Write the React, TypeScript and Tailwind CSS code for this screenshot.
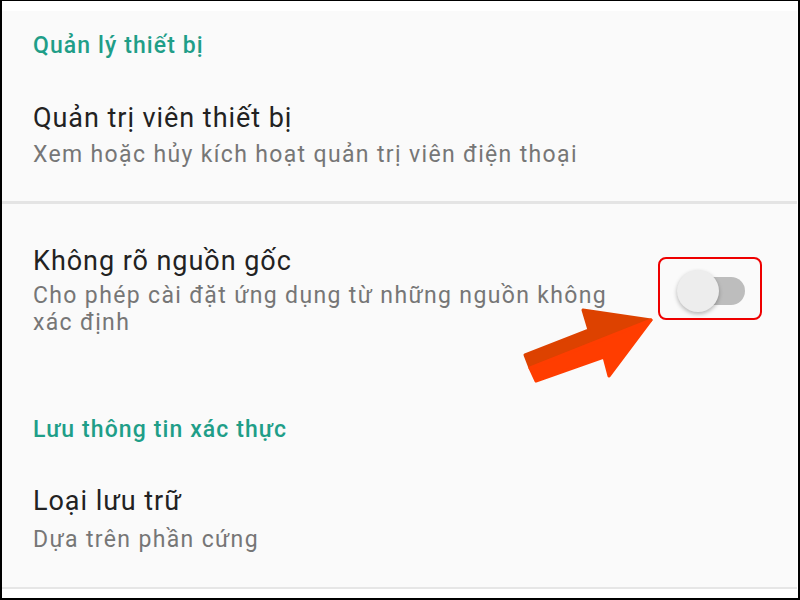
import React from "react";

function Arrow() {
  return (
    <svg
      className="absolute left-[515px] top-[300px]"
      width="145"
      height="90"
      viewBox="515 300 145 90"
    >
      <polygon
        points="649,319 581,309 587,329 523,354 528,367"
        fill="#dd4200"
        stroke="#dd4200"
        strokeWidth="3"
        strokeLinejoin="round"
      />
      <polygon
        points="649,319 528,367 534,380 602,356 607,375"
        fill="#ff3d00"
        stroke="#ff3d00"
        strokeWidth="3"
        strokeLinejoin="round"
      />
    </svg>
  );
}

export default function App() {
  return (
    <div
      className="relative w-[800px] h-[600px] bg-white border-l-2 border-t border-r-2 border-b-2 border-black pt-[10px] pr-px pb-[9px] overflow-hidden"
      style={{ fontFamily: "Roboto, 'Noto Sans', sans-serif" }}
    >
      <div className="flex flex-col h-full bg-[#fafafa] border-b-2 border-[#e6e6e6]">
        {/* Section 1 header */}
        <div className="pl-[31px] pt-[22px] text-[23px] leading-[26px] tracking-[1.1px] font-medium text-[#1f9e88]">
          Quản lý thiết bị
        </div>
        {/* Item 1 */}
        <div className="pl-[31px] pt-[44px]">
          <div className="text-[27px] leading-[30px] tracking-[0.95px] text-[#222222]">Quản trị viên thiết bị</div>
          <div className="mt-[9px] text-[23px] leading-[26px] tracking-[1.35px] text-[#767676]">
            Xem hoặc hủy kích hoạt quản trị viên điện thoại
          </div>
        </div>
        <div className="mt-[33px] h-[3px] bg-[#e4e4e4]" />
        {/* Item 2 */}
        <div className="flex pl-[31px] pt-[42px]">
          <div className="flex-1">
            <div className="text-[27px] leading-[30px] tracking-[0.95px] text-[#222222]">Không rõ nguồn gốc</div>
            <div className="mt-[6px] w-[600px] text-[23px] leading-[27px] tracking-[1.35px] text-[#767676]">
              Cho phép cài đặt ứng dụng từ những nguồn không xác định
            </div>
          </div>
          <div className="mt-[11px] mr-[35px] w-[104px] h-[63px] rounded-[8px] border-2 border-[#ee0000] flex items-center justify-center">
            <div className="relative w-[70px] h-[42px] translate-x-[2px] translate-y-[2px]">
              <div className="absolute left-[12px] top-[7px] w-[56px] h-[28px] rounded-full bg-[#bdbdbd]" />
              <div className="absolute left-0 top-0 w-[42px] h-[42px] rounded-full bg-[#ededed] shadow-[0_2px_4px_rgba(0,0,0,0.28)]" />
            </div>
          </div>
        </div>
        {/* Section 2 header */}
        <div className="pl-[31px] pt-[81px] text-[23px] leading-[26px] tracking-[1.1px] font-medium text-[#1f9e88]">
          Lưu thông tin xác thực
        </div>
        {/* Item 3 */}
        <div className="pl-[31px] pt-[43px]">
          <div className="text-[27px] leading-[30px] tracking-[0.95px] text-[#222222]">Loại lưu trữ</div>
          <div className="mt-[11px] text-[23px] leading-[26px] tracking-[1.35px] text-[#767676]">Dựa trên phần cứng</div>
        </div>
      </div>
      <Arrow />
    </div>
  );
}
